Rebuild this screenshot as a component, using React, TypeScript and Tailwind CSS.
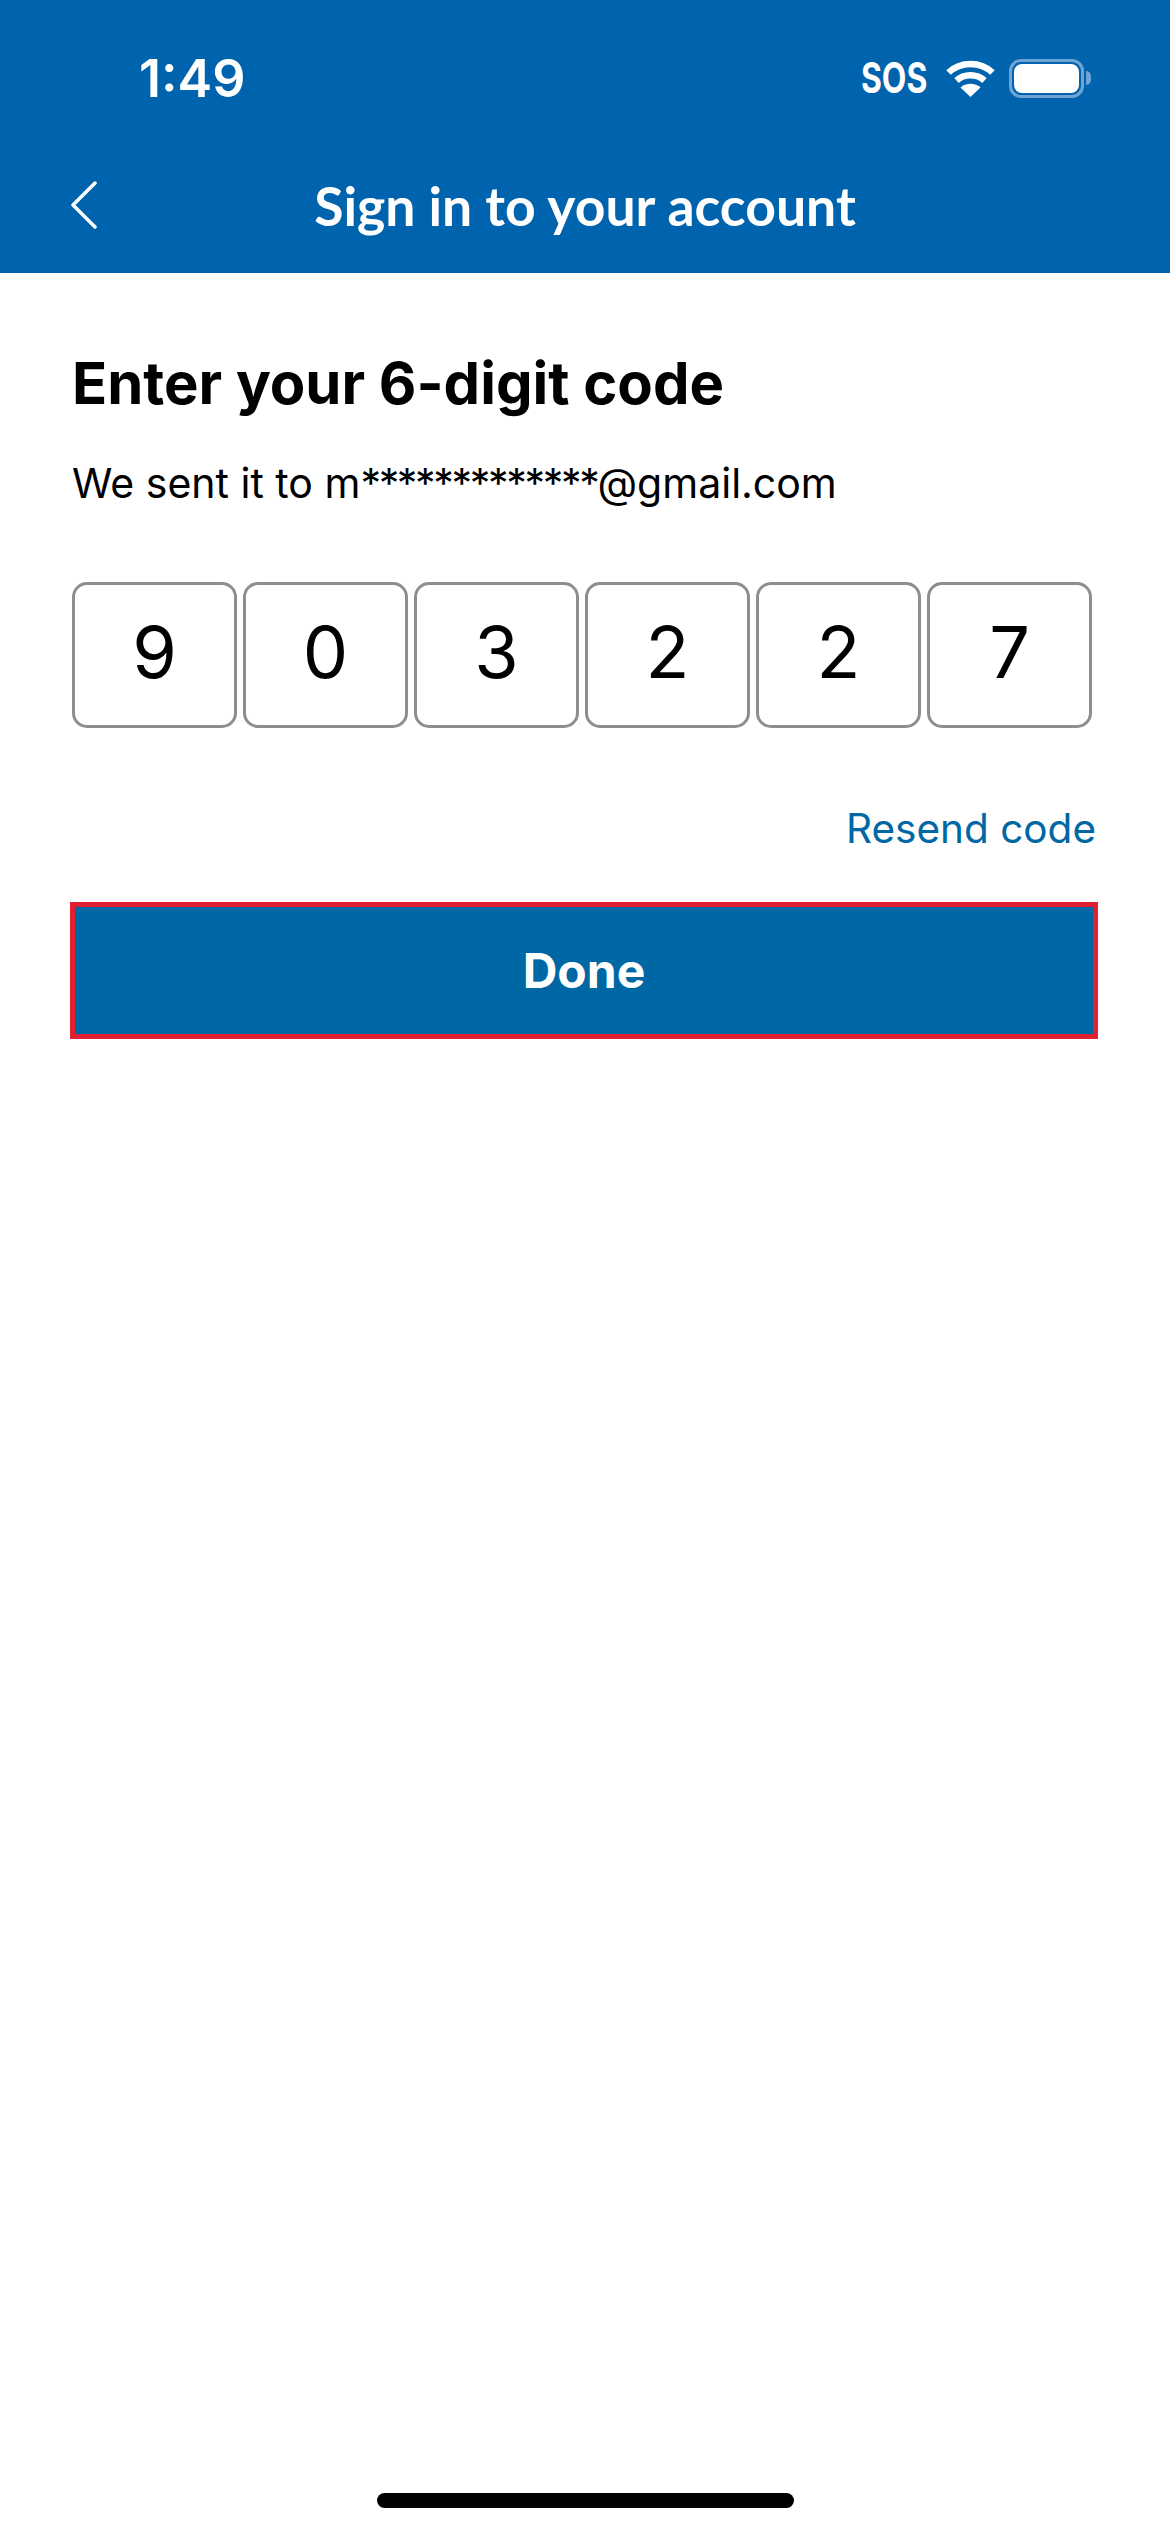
import React from 'react';

const code = ['9', '0', '3', '2', '2', '7'];

const WifiIcon = () => (
  <svg width="49" height="38" viewBox="0 0 49 38" fill="none">
    <path d="M2.5 13.5C14.5 2 34.5 2 46.5 13.5" stroke="white" strokeWidth="6.5" />
    <path d="M10.5 21.5C18 14.5 31 14.5 38.5 21.5" stroke="white" strokeWidth="6.5" />
    <path d="M24.5 38L14.5 28.5C20 23.5 29 23.5 34.5 28.5L24.5 38Z" fill="white" />
  </svg>
);

const BatteryIcon = () => (
  <div className="flex items-center">
    <div className="w-[75px] h-[39px] rounded-[12px] border-[3px] border-[#6fa3d6] p-[2px]">
      <div className="w-full h-full rounded-[8px] bg-white" />
    </div>
    <div className="ml-[2px] w-[5px] h-[14px] rounded-r-full bg-[#6fa3d6]" />
  </div>
);

const BackChevron = () => (
  <svg width="28" height="48" viewBox="0 0 28 48" fill="none">
    <path d="M25 2L3 24L25 46" stroke="white" strokeWidth="3.5" strokeLinecap="round" strokeLinejoin="round" />
  </svg>
);

export default function App() {
  return (
    <div className="flex flex-col w-[1170px] h-[2532px] bg-white text-black font-['Inter',sans-serif] overflow-hidden">
      <header className="h-[273px] bg-[#0063ae] text-white flex flex-col">
        <div className="flex items-center justify-between h-[78px] mt-[39px] pl-[139px] pr-[79px]">
          <span className="text-[52px] leading-none font-semibold mt-[2px]">1:49</span>
          <div className="flex items-center">
            <span className="text-[42px] leading-none font-bold scale-x-[0.76] origin-right">SOS</span>
            <span className="ml-[19px]"><WifiIcon /></span>
            <span className="ml-[14px]"><BatteryIcon /></span>
          </div>
        </div>
        <div className="relative flex items-center justify-center h-[90px] mt-[42px]">
          <button className="absolute left-[70px] top-[22px]"><BackChevron /></button>
          <h1 className="text-[53.5px] leading-none font-bold font-['Lato',sans-serif] mt-[3px]">Sign in to your account</h1>
        </div>
      </header>

      <main className="flex flex-col flex-1 pl-[72px] pr-[72px]">
        <h2 className="mt-[74px] text-[58px] leading-[72px] font-bold">Enter your 6-digit code</h2>
        <p className="mt-[38px] text-[41px] leading-[52px]">
          We sent it to m<span className="tracking-[-2.3px]">*************</span>@gmail.com
        </p>

        <div className="mt-[73px] flex gap-[6px]">
          {code.map((digit, i) => (
            <div
              key={i}
              className="w-[165px] h-[146px] pb-[6px] flex items-center justify-center rounded-[15px] border-[3px] border-[#8e8e8e] text-[72px] leading-none"
            >
              {digit}
            </div>
          ))}
        </div>

        <div className="mt-[75px] mr-[2px] flex justify-end">
          <a className="text-[40.5px] leading-[52px] text-[#0067a5]">Resend code</a>
        </div>

        <button className="mt-[47px] -ml-[2px] h-[137px] border-[5px] border-[#e02030] bg-[#0067a5] text-white text-[48px] font-bold">
          Done
        </button>

        <div className="mt-auto mb-[24px] self-center w-[417px] h-[15px] rounded-full bg-black" />
      </main>
    </div>
  );
}
